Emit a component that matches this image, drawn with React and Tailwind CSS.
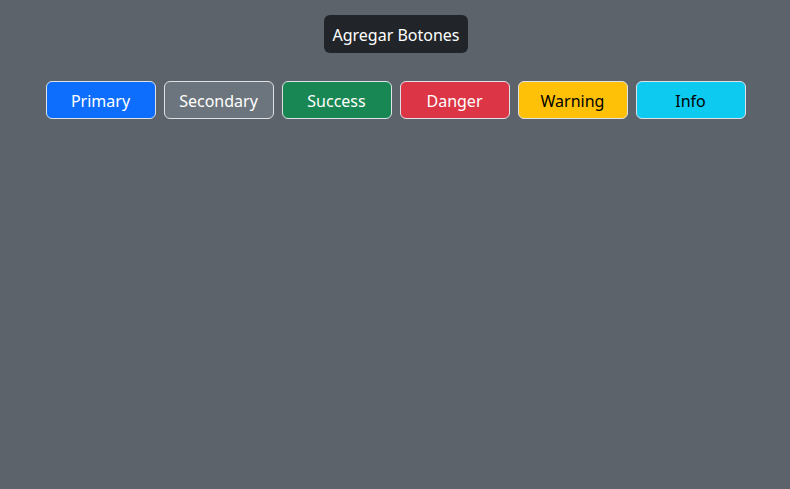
const BUTTONS = [
  { label: "Primary", cls: "bg-[#0d6efd] text-white" },
  { label: "Secondary", cls: "bg-[#6c757d] text-white" },
  { label: "Success", cls: "bg-[#198754] text-white" },
  { label: "Danger", cls: "bg-[#dc3545] text-white" },
  { label: "Warning", cls: "bg-[#ffc107] text-black" },
  { label: "Info", cls: "bg-[#0dcaf0] text-black" },
];

export default function App() {
  return (
    <div
      className="min-h-screen bg-[#5c636a] pt-[15px]"
      style={{ fontFamily: '"Segoe UI", "Noto Sans", sans-serif' }}
    >
      <div className="flex justify-center pl-[2px]">
        <button
          type="button"
          className="h-[38px] w-[144px] rounded-[6px] bg-[#212529] pt-[2px] text-[16px] text-white"
        >
          Agregar Botones
        </button>
      </div>

      <div className="mt-[28px] flex justify-center gap-2 pl-[1px]">
        {BUTTONS.map((b) => (
          <button
            type="button"
            key={b.label}
            className={`h-[38px] w-[110px] rounded-[6px] border border-[#dee2e6] pt-[1px] text-[16px] ${b.cls}`}
          >
            {b.label}
          </button>
        ))}
      </div>
    </div>
  );
}
